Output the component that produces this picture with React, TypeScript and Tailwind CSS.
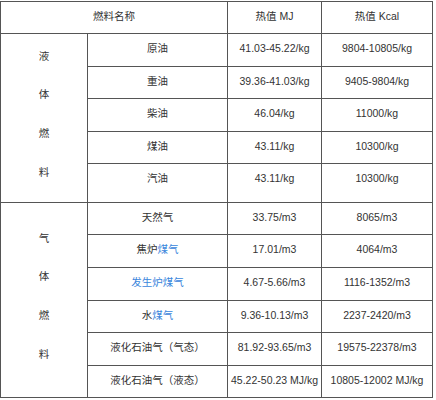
import React from 'react';

type Row = {
  name: React.ReactNode;
  mj: string;
  kcal: string;
  h: string;
};

const Blue = ({ children }: { children: React.ReactNode }) => (
  <span className="text-[#3a86dc]">{children}</span>
);

const LIQUID: Row[] = [
  { name: '原油', mj: '41.03-45.22/kg', kcal: '9804-10805/kg', h: 'h-[33px]' },
  { name: '重油', mj: '39.36-41.03/kg', kcal: '9405-9804/kg', h: 'h-[32px]' },
  { name: '柴油', mj: '46.04/kg', kcal: '11000/kg', h: 'h-[33px]' },
  { name: '煤油', mj: '43.11/kg', kcal: '10300/kg', h: 'h-[32px]' },
  { name: '汽油', mj: '43.11/kg', kcal: '10300/kg', h: 'h-[39px]' },
];

const GAS: Row[] = [
  { name: '天然气', mj: '33.75/m3', kcal: '8065/m3', h: 'h-[32px]' },
  { name: <>焦炉<Blue>煤气</Blue></>, mj: '17.01/m3', kcal: '4064/m3', h: 'h-[33px]' },
  { name: <Blue>发生炉煤气</Blue>, mj: '4.67-5.66/m3', kcal: '1116-1352/m3', h: 'h-[33px]' },
  { name: <>水<Blue>煤气</Blue></>, mj: '9.36-10.13/m3', kcal: '2237-2420/m3', h: 'h-[32px]' },
  { name: '液化石油气（气态）', mj: '81.92-93.65/m3', kcal: '19575-22378/m3', h: 'h-[33px]' },
  { name: '液化石油气（液态）', mj: '45.22-50.23 MJ/kg', kcal: '10805-12002 MJ/kg', h: 'h-[32px]' },
];

const cell = 'border border-[#555] align-top pt-[6px] text-center leading-4';

function Category({ chars, rows }: { chars: string[]; rows: number }) {
  return (
    <td rowSpan={rows} className="border border-[#555] align-middle text-center pb-[8px]">
      {chars.map((c, i) => (
        <div key={i} className="leading-[38.6px]">
          {c}
        </div>
      ))}
    </td>
  );
}

function Section({ label, rows }: { label: string[]; rows: Row[] }) {
  return (
    <>
      {rows.map((r, i) => (
        <tr key={i} className={r.h}>
          {i === 0 && <Category chars={label} rows={rows.length} />}
          <td className={cell}>{r.name}</td>
          <td className={cell}>{r.mj}</td>
          <td className={cell}>{r.kcal}</td>
        </tr>
      ))}
    </>
  );
}

export default function App() {
  return (
    <div className="w-[436px] h-[400px] bg-white pt-px">
      <table
        className="w-[432px] border-collapse table-fixed text-[10.5px] text-[#333]"
        style={{ fontFamily: '"Liberation Sans", "Noto Sans CJK SC", sans-serif' }}
      >
        <colgroup>
          <col className="w-[87px]" />
          <col className="w-[140px]" />
          <col className="w-[94px]" />
          <col className="w-[111px]" />
        </colgroup>
        <tbody>
          <tr className="h-[32px]">
            <td colSpan={2} className={cell}>燃料名称</td>
            <td className={cell}>热值 MJ</td>
            <td className={cell}>热值 Kcal</td>
          </tr>
          <Section label={['液', '体', '燃', '料']} rows={LIQUID} />
          <Section label={['气', '体', '燃', '料']} rows={GAS} />
        </tbody>
      </table>
    </div>
  );
}
